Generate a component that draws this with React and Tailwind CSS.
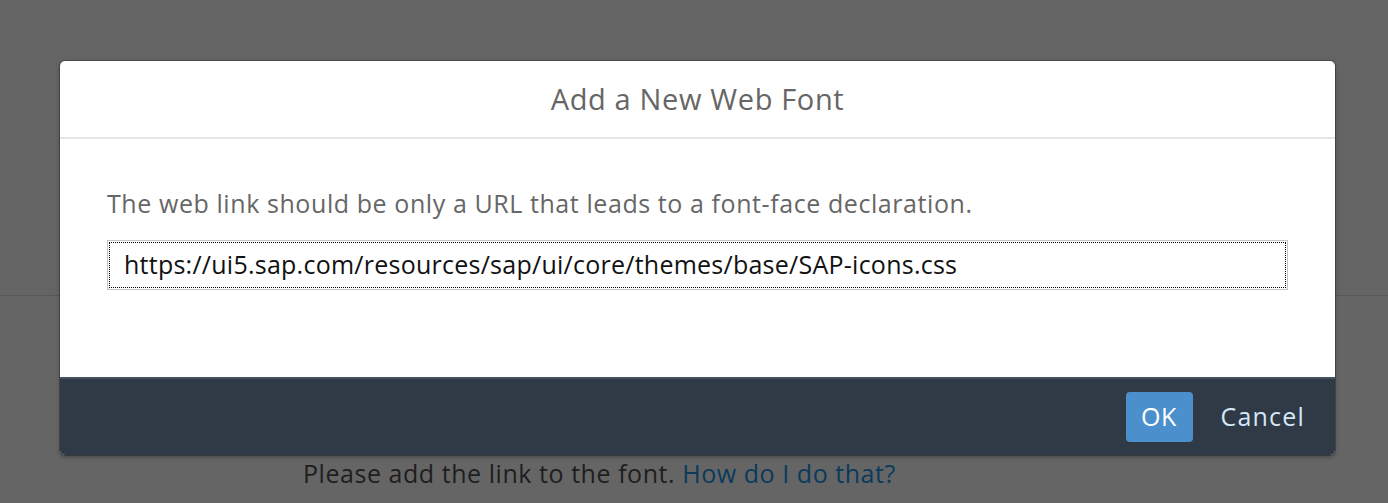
export default function App() {
  const font = { fontFamily: '"Open Sans", "Liberation Sans", Arial, sans-serif' };
  return (
    <div className="relative w-[1388px] h-[503px] overflow-hidden bg-[#646464]" style={font}>
      {/* background page (dimmed) */}
      <div className="h-[296px] border-b border-[#585858] bg-[#646464]" />
      <div className="h-[207px] bg-[#656565] pt-[162px] pl-[303px] text-[25px] leading-[30px] tracking-[0.55px]">
        <span className="text-[#1e1e1e]">Please add the link to the font. </span>
        <span className="text-[#0a3a5c]">How do I do that?</span>
      </div>

      {/* dialog */}
      <div className="absolute left-[60px] top-[61px] w-[1275px] h-[394px] rounded-[5px] bg-white flex flex-col overflow-hidden shadow-[0_0_0_1px_rgba(0,0,0,0.25),0_2px_4px_rgba(0,0,0,0.3)]">
        <div className="h-[78px] flex items-center justify-center border-b-2 border-[#e5e5e5] text-[#666666] text-[29px] tracking-[0.65px]">
          Add a New Web Font
        </div>
        <div className="flex-1 px-[47px] pt-[49px]">
          <div className="text-[#666666] text-[25px] leading-[30px] tracking-[0.58px]">
            The web link should be only a URL that leads to a font-face declaration.
          </div>
          <div className="mt-[22px] h-[50px] border border-[#c3c3c3] p-px">
            <div className="h-full border border-dotted border-black flex items-center pl-[14px] text-[25px] tracking-[0.25px] text-[#111111]">
              https://ui5.sap.com/resources/sap/ui/core/themes/base/SAP-icons.css
            </div>
          </div>
        </div>
        <div className="h-[78px] bg-[#2f3a46] border-t-2 border-[#46525f] flex items-center justify-end pr-[30px] gap-[28px]">
          <div className="w-[67px] h-[50px] rounded-[4px] bg-[#4b90cc] text-white text-[25px] tracking-[0.5px] flex items-center justify-center">
            OK
          </div>
          <div className="text-[#d5e7f8] text-[25px] tracking-[1.2px]">Cancel</div>
        </div>
      </div>
    </div>
  );
}
